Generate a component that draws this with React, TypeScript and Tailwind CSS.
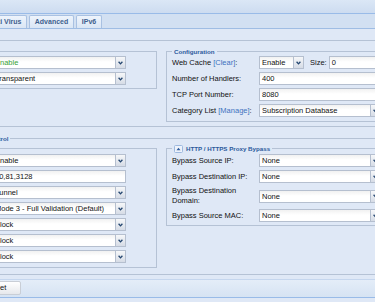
import React from 'react';

const FONT = "font-['Liberation_Sans',Arial,sans-serif]";

const Chevron = () => (
  <svg width="5" height="4" viewBox="0 0 5 4">
    <path d="M0.6 0.8L2.5 2.9L4.4 0.8" fill="none" stroke="#23456f" strokeWidth="1.3" />
  </svg>
);

const Field = ({
  text,
  width,
  select,
  green,
}: {
  text: string;
  width: string;
  select?: boolean;
  green?: boolean;
}) => (
  <div className={`flex h-[13px] shrink-0 border border-[#b5bfcf] bg-white ${width}`}>
    <div
      className={`flex-1 overflow-hidden whitespace-nowrap bg-gradient-to-b from-[#f1f1f1] to-white to-[45%] pl-[2px] leading-[11px] ${
        green ? 'text-[#37a237]' : 'text-[#111]'
      }`}
    >
      {text}
    </div>
    {select && (
      <div className="flex w-[10px] shrink-0 items-center justify-center border-l border-[#b5bfcf] bg-gradient-to-b from-[#f6f7f9] to-[#d6dce6]">
        <Chevron />
      </div>
    )}
  </div>
);

const Tab = ({ label, width }: { label: string; width: string }) => (
  <div
    className={`h-[13px] rounded-t-[2px] border border-b-0 border-[#a9c1e2] bg-gradient-to-b from-[#eef4fc] to-[#dae6f5] text-center text-[7px] font-bold leading-[12px] text-[#3e5f8e] ${width}`}
  >
    {label}
  </div>
);

const Row = ({ label, children }: { label: React.ReactNode; children: React.ReactNode }) => (
  <div className="flex h-[13px] items-center">
    <div className="w-[87px] shrink-0 whitespace-nowrap">{label}</div>
    {children}
  </div>
);

const ToggleTool = () => (
  <svg width="9" height="8" viewBox="0 0 9 8" className="shrink-0">
    <rect x="0.5" y="0.5" width="8" height="7" rx="1" fill="#eef3fb" stroke="#9db9df" />
    <path d="M2.5 5.2L4.5 2.8L6.5 5.2Z" fill="#2c5a9c" />
  </svg>
);

export default function App() {
  return (
    <div className={`h-[302px] w-[375px] overflow-hidden bg-[#dfe8f6] text-[7.5px] text-[#111] ${FONT}`}>
      {/* header band */}
      <div className="h-[14px] border-b border-[#99bbe8] bg-gradient-to-b from-[#dbe7f6] to-[#cddcf0]" />

      {/* tab strip */}
      <div className="h-[15px] border-b border-[#9fbde4] bg-[#d2e0f2] pt-[1px]">
        <div className="-ml-[17px] flex gap-[2px]">
          <Tab label="Anti Virus" width="w-[44px]" />
          <Tab label="Advanced" width="w-[45px]" />
          <Tab label="IPv6" width="w-[26px]" />
        </div>
      </div>

      {/* body */}
      <div className="pt-[11px]">
        <div className="-ml-[50px] w-[470px]">
          {/* general */}
          <fieldset className="border border-[#b5c2d5] pb-[4px] pl-[10px] pt-[6px]">
            <div className="ml-[27px] flex items-start gap-[9px]">
              <fieldset className="mt-[4px] w-[169px] border border-[#b5c2d5] pb-[3px] pl-[3px] pr-[30px] pt-[4px]">
                <div className="flex flex-col gap-[3px]">
                  <Field text="Enable" width="w-[134px]" select green />
                  <Field text="Transparent" width="w-[134px]" select />
                </div>
              </fieldset>

              <fieldset className="w-[230px] border border-[#b5c2d5] pb-[4px] pl-[5px]">
                <legend className="h-[9px] px-[2px] text-[6.2px] font-bold leading-[9px] text-[#2c5a9c]">
                  Configuration
                </legend>
                <div className="flex flex-col gap-[3px]">
                  <Row
                    label={
                      <>
                        Web Cache <span className="text-[#3d72c0]">[Clear]</span>:
                      </>
                    }
                  >
                    <Field text="Enable" width="w-[45px]" select />
                    <span className="ml-[6px]">Size:</span>
                    <Field text="0" width="ml-[2px] w-[60px]" />
                  </Row>
                  <Row label="Number of Handlers:">
                    <Field text="400" width="w-[122px]" />
                  </Row>
                  <Row label="TCP Port Number:">
                    <Field text="8080" width="w-[122px]" />
                  </Row>
                  <Row
                    label={
                      <>
                        Category List <span className="text-[#3d72c0]">[Manage]</span>:
                      </>
                    }
                  >
                    <Field text="Subscription Database" width="w-[122px]" select />
                  </Row>
                </div>
              </fieldset>
            </div>
          </fieldset>

          {/* access control */}
          <fieldset className="mt-[7px] border border-[#b5c2d5] pb-[6px] pl-[10px]">
            <legend className="h-[9px] px-[2px] text-[6.2px] font-bold leading-[9px] text-[#2c5a9c]">
              Access Control
            </legend>
            <div className="ml-[27px] flex items-start gap-[9px] pt-[1px]">
              <fieldset className="mt-[4px] w-[169px] border border-[#b5c2d5] pb-[4px] pl-[3px] pr-[30px] pt-[5px]">
                <div className="flex flex-col gap-[3px]">
                  <Field text="Enable" width="w-[134px]" select />
                  <Field text="80,81,3128" width="w-[134px]" />
                  <Field text="Tunnel" width="w-[134px]" select />
                  <Field text="Mode 3 - Full Validation (Default)" width="w-[134px]" select />
                  <Field text="Block" width="w-[134px]" select />
                  <Field text="Block" width="w-[134px]" select />
                  <Field text="Block" width="w-[134px]" select />
                </div>
              </fieldset>

              <fieldset className="w-[230px] border border-[#b5c2d5] pb-[3px] pl-[5px]">
                <legend className="flex h-[9px] items-center gap-[3px] px-[2px] text-[6.2px] font-bold leading-[9px] text-[#2c5a9c]">
                  <ToggleTool />
                  HTTP / HTTPS Proxy Bypass
                </legend>
                <div className="flex flex-col gap-[3px] pt-[1px]">
                  <Row label="Bypass Source IP:">
                    <Field text="None" width="w-[122px]" select />
                  </Row>
                  <Row label="Bypass Destination IP:">
                    <Field text="None" width="w-[122px]" select />
                  </Row>
                  <div className="flex h-[20px] items-center">
                    <div className="w-[87px] shrink-0 leading-[10px]">
                      Bypass Destination
                      <br />
                      Domain:
                    </div>
                    <Field text="None" width="w-[122px]" select />
                  </div>
                  <Row label="Bypass Source MAC:">
                    <Field text="None" width="w-[122px]" select />
                  </Row>
                </div>
              </fieldset>
            </div>
          </fieldset>
        </div>

        {/* button bar */}
        <div className="mt-[4px] h-[19px] border-y border-b-[#99bbe8] border-t-[#c5d6ee] bg-gradient-to-b from-[#e4edf8] to-[#d6e3f3] pt-[1px]">
          <div className="-ml-[28px] h-[14px] w-[49px] rounded-[2px] border border-[#c9ced6] bg-gradient-to-b from-white to-[#e6e8ec] text-center leading-[12px]">
            Reset
          </div>
        </div>
      </div>
    </div>
  );
}
